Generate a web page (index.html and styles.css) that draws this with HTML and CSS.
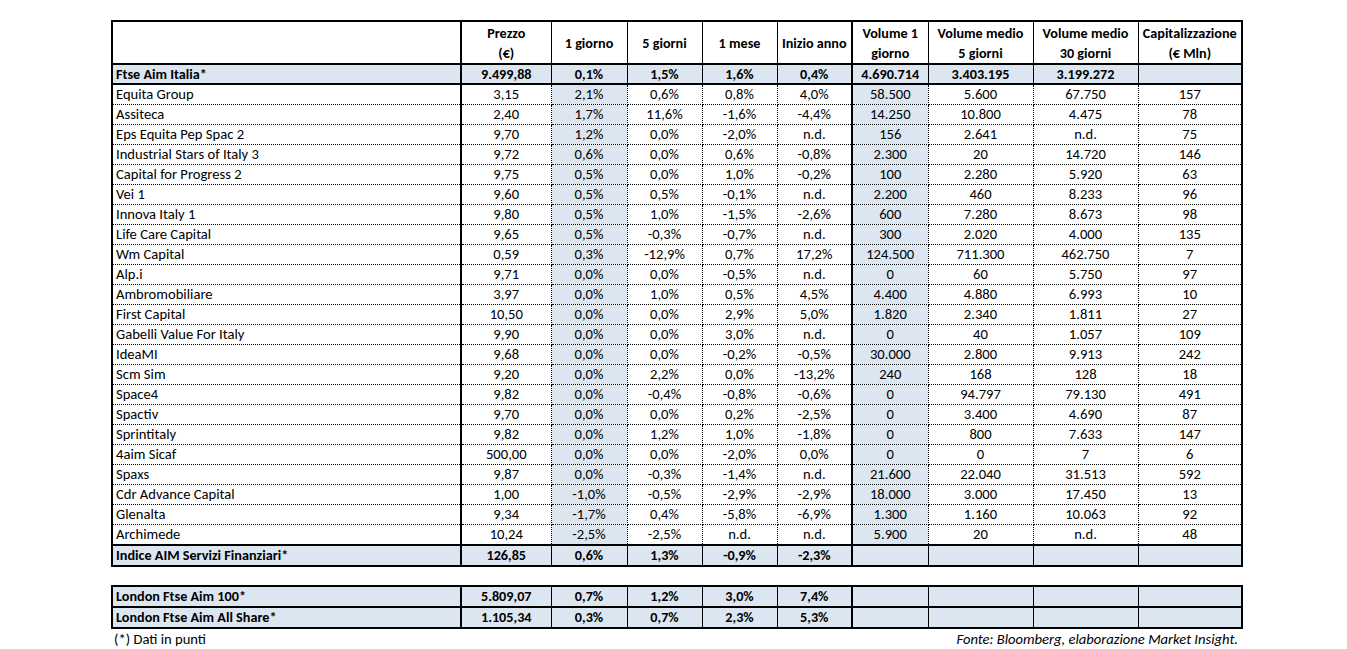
FILE: index.html
```html
<!DOCTYPE html>
<html lang="it">
<head>
<meta charset="utf-8">
<title>AIM Servizi Finanziari</title>
<link rel="stylesheet" href="styles.css">
</head>
<body>
<div class="wrap">
<table class="tbl main">
<colgroup>
<col class="c-name"><col class="c-price"><col class="c-d1"><col class="c-d5"><col class="c-m1"><col class="c-ytd"><col class="c-v1"><col class="c-v5"><col class="c-v30"><col class="c-cap">
</colgroup>
<thead>
<tr class="hdr">
<th></th><th>Prezzo<br>(€)</th><th>1 giorno</th><th>5 giorni</th><th>1 mese</th><th class="sep">Inizio anno</th><th>Volume 1<br>giorno</th><th>Volume medio<br>5 giorni</th><th>Volume medio<br>30 giorni</th><th>Capitalizzazione<br>(€ Mln)</th>
</tr>
</thead>
<tbody>
<tr class="idx top"><td class="name">Ftse Aim Italia*</td><td>9.499,88</td><td>0,1%</td><td>1,5%</td><td>1,6%</td><td class="sep">0,4%</td><td>4.690.714</td><td>3.403.195</td><td>3.199.272</td><td></td></tr>
<tr class="row"><td class="name">Equita Group</td><td>3,15</td><td class="hl">2,1%</td><td>0,6%</td><td>0,8%</td><td class="sep">4,0%</td><td class="hl">58.500</td><td>5.600</td><td>67.750</td><td>157</td></tr>
<tr class="row"><td class="name">Assiteca</td><td>2,40</td><td class="hl">1,7%</td><td>11,6%</td><td>-1,6%</td><td class="sep">-4,4%</td><td class="hl">14.250</td><td>10.800</td><td>4.475</td><td>78</td></tr>
<tr class="row"><td class="name">Eps Equita Pep Spac 2</td><td>9,70</td><td class="hl">1,2%</td><td>0,0%</td><td>-2,0%</td><td class="sep">n.d.</td><td class="hl">156</td><td>2.641</td><td>n.d.</td><td>75</td></tr>
<tr class="row"><td class="name">Industrial Stars of Italy 3</td><td>9,72</td><td class="hl">0,6%</td><td>0,0%</td><td>0,6%</td><td class="sep">-0,8%</td><td class="hl">2.300</td><td>20</td><td>14.720</td><td>146</td></tr>
<tr class="row"><td class="name">Capital for Progress 2</td><td>9,75</td><td class="hl">0,5%</td><td>0,0%</td><td>1,0%</td><td class="sep">-0,2%</td><td class="hl">100</td><td>2.280</td><td>5.920</td><td>63</td></tr>
<tr class="row"><td class="name">Vei 1</td><td>9,60</td><td class="hl">0,5%</td><td>0,5%</td><td>-0,1%</td><td class="sep">n.d.</td><td class="hl">2.200</td><td>460</td><td>8.233</td><td>96</td></tr>
<tr class="row"><td class="name">Innova Italy 1</td><td>9,80</td><td class="hl">0,5%</td><td>1,0%</td><td>-1,5%</td><td class="sep">-2,6%</td><td class="hl">600</td><td>7.280</td><td>8.673</td><td>98</td></tr>
<tr class="row"><td class="name">Life Care Capital</td><td>9,65</td><td class="hl">0,5%</td><td>-0,3%</td><td>-0,7%</td><td class="sep">n.d.</td><td class="hl">300</td><td>2.020</td><td>4.000</td><td>135</td></tr>
<tr class="row"><td class="name">Wm Capital</td><td>0,59</td><td class="hl">0,3%</td><td>-12,9%</td><td>0,7%</td><td class="sep">17,2%</td><td class="hl">124.500</td><td>711.300</td><td>462.750</td><td>7</td></tr>
<tr class="row"><td class="name">Alp.i</td><td>9,71</td><td class="hl">0,0%</td><td>0,0%</td><td>-0,5%</td><td class="sep">n.d.</td><td class="hl">0</td><td>60</td><td>5.750</td><td>97</td></tr>
<tr class="row"><td class="name">Ambromobiliare</td><td>3,97</td><td class="hl">0,0%</td><td>1,0%</td><td>0,5%</td><td class="sep">4,5%</td><td class="hl">4.400</td><td>4.880</td><td>6.993</td><td>10</td></tr>
<tr class="row"><td class="name">First Capital</td><td>10,50</td><td class="hl">0,0%</td><td>0,0%</td><td>2,9%</td><td class="sep">5,0%</td><td class="hl">1.820</td><td>2.340</td><td>1.811</td><td>27</td></tr>
<tr class="row"><td class="name">Gabelli Value For Italy</td><td>9,90</td><td class="hl">0,0%</td><td>0,0%</td><td>3,0%</td><td class="sep">n.d.</td><td class="hl">0</td><td>40</td><td>1.057</td><td>109</td></tr>
<tr class="row"><td class="name">IdeaMI</td><td>9,68</td><td class="hl">0,0%</td><td>0,0%</td><td>-0,2%</td><td class="sep">-0,5%</td><td class="hl">30.000</td><td>2.800</td><td>9.913</td><td>242</td></tr>
<tr class="row"><td class="name">Scm Sim</td><td>9,20</td><td class="hl">0,0%</td><td>2,2%</td><td>0,0%</td><td class="sep">-13,2%</td><td class="hl">240</td><td>168</td><td>128</td><td>18</td></tr>
<tr class="row"><td class="name">Space4</td><td>9,82</td><td class="hl">0,0%</td><td>-0,4%</td><td>-0,8%</td><td class="sep">-0,6%</td><td class="hl">0</td><td>94.797</td><td>79.130</td><td>491</td></tr>
<tr class="row"><td class="name">Spactiv</td><td>9,70</td><td class="hl">0,0%</td><td>0,0%</td><td>0,2%</td><td class="sep">-2,5%</td><td class="hl">0</td><td>3.400</td><td>4.690</td><td>87</td></tr>
<tr class="row"><td class="name">Sprintitaly</td><td>9,82</td><td class="hl">0,0%</td><td>1,2%</td><td>1,0%</td><td class="sep">-1,8%</td><td class="hl">0</td><td>800</td><td>7.633</td><td>147</td></tr>
<tr class="row"><td class="name">4aim Sicaf</td><td>500,00</td><td class="hl">0,0%</td><td>0,0%</td><td>-2,0%</td><td class="sep">0,0%</td><td class="hl">0</td><td>0</td><td>7</td><td>6</td></tr>
<tr class="row"><td class="name">Spaxs</td><td>9,87</td><td class="hl">0,0%</td><td>-0,3%</td><td>-1,4%</td><td class="sep">n.d.</td><td class="hl">21.600</td><td>22.040</td><td>31.513</td><td>592</td></tr>
<tr class="row"><td class="name">Cdr Advance Capital</td><td>1,00</td><td class="hl">-1,0%</td><td>-0,5%</td><td>-2,9%</td><td class="sep">-2,9%</td><td class="hl">18.000</td><td>3.000</td><td>17.450</td><td>13</td></tr>
<tr class="row"><td class="name">Glenalta</td><td>9,34</td><td class="hl">-1,7%</td><td>0,4%</td><td>-5,8%</td><td class="sep">-6,9%</td><td class="hl">1.300</td><td>1.160</td><td>10.063</td><td>92</td></tr>
<tr class="row"><td class="name">Archimede</td><td>10,24</td><td class="hl">-2,5%</td><td>-2,5%</td><td>n.d.</td><td class="sep">n.d.</td><td class="hl">5.900</td><td>20</td><td>n.d.</td><td>48</td></tr>
<tr class="idx bottom"><td class="name">Indice AIM Servizi Finanziari*</td><td>126,85</td><td>0,6%</td><td>1,3%</td><td>-0,9%</td><td class="sep">-2,3%</td><td></td><td></td><td></td><td></td></tr>
</tbody>
</table>

<table class="tbl london">
<colgroup>
<col class="c-name"><col class="c-price"><col class="c-d1"><col class="c-d5"><col class="c-m1"><col class="c-ytd"><col class="c-v1"><col class="c-v5"><col class="c-v30"><col class="c-cap">
</colgroup>
<tbody>
<tr class="idx"><td class="name">London Ftse Aim 100*</td><td>5.809,07</td><td>0,7%</td><td>1,2%</td><td>3,0%</td><td class="sep">7,4%</td><td></td><td></td><td></td><td></td></tr>
<tr class="idx"><td class="name">London Ftse Aim All Share*</td><td>1.105,34</td><td>0,3%</td><td>0,7%</td><td>2,3%</td><td class="sep">5,3%</td><td></td><td></td><td></td><td></td></tr>
</tbody>
</table>

<div class="foot">
<span class="note">(*) Dati in punti</span>
<span class="src">Fonte: Bloomberg, elaborazione Market Insight.</span>
</div>
</div>
</body>
</html>
```

FILE: styles.css
```css
html, body {
  margin: 0;
  padding: 0;
  background: #ffffff;
}

body {
  font-family: "Carlito", Lato, "Open Sans", sans-serif;
  font-size: 14.6px;
  color: #000000;
}

.wrap {
  width: 1131px;
  margin-left: 111px;
  padding-top: 20px;
}

.tbl {
  width: 1131px;
  border-collapse: collapse;
  table-layout: fixed;
  border: 2px solid #000;
}

.c-name { width: 349px; }
.c-price { width: 90px; }
.c-d1 { width: 76px; }
.c-d5 { width: 75px; }
.c-m1 { width: 75px; }
.c-ytd { width: 75px; }
.c-v1 { width: 76px; }
.c-v5 { width: 105px; }
.c-v30 { width: 105px; }
.c-cap { width: 104px; }

.tbl td, .tbl th {
  padding: 0 1px;
  text-align: center;
  white-space: nowrap;
  overflow: hidden;
  line-height: 19px;
  height: 19px;
}

.tbl td.name {
  text-align: left;
  padding-left: 3px;
}

.hdr th {
  font-weight: bold;
  font-size: 14.2px;
  height: 41px;
  line-height: 20px;
  border: 1px solid #000;
  border-bottom: 2px solid #000;
}

.hdr th:first-child,
.row td:first-child,
.idx td:first-child {
  border-right: 2px solid #000;
}

.tbl .sep {
  border-right: 2px solid #000;
}

.row td {
  border: 1px dotted #000;
}

.row td.hl {
  background: #dce6f1;
}

.idx td {
  background: #dce6f1;
  font-weight: bold;
  font-size: 14.2px;
  border: 1px solid #000;
  border-top: 2px solid #000;
  border-bottom: 2px solid #000;
  height: 17px;
}

.idx.top td {
  height: 18px;
  line-height: 18px;
}

.london {
  margin-top: 18px;
}

.foot {
  display: flex;
  justify-content: space-between;
  padding: 0 4px 0 3px;
  line-height: 20px;
}

.src {
  font-style: italic;
}
```
